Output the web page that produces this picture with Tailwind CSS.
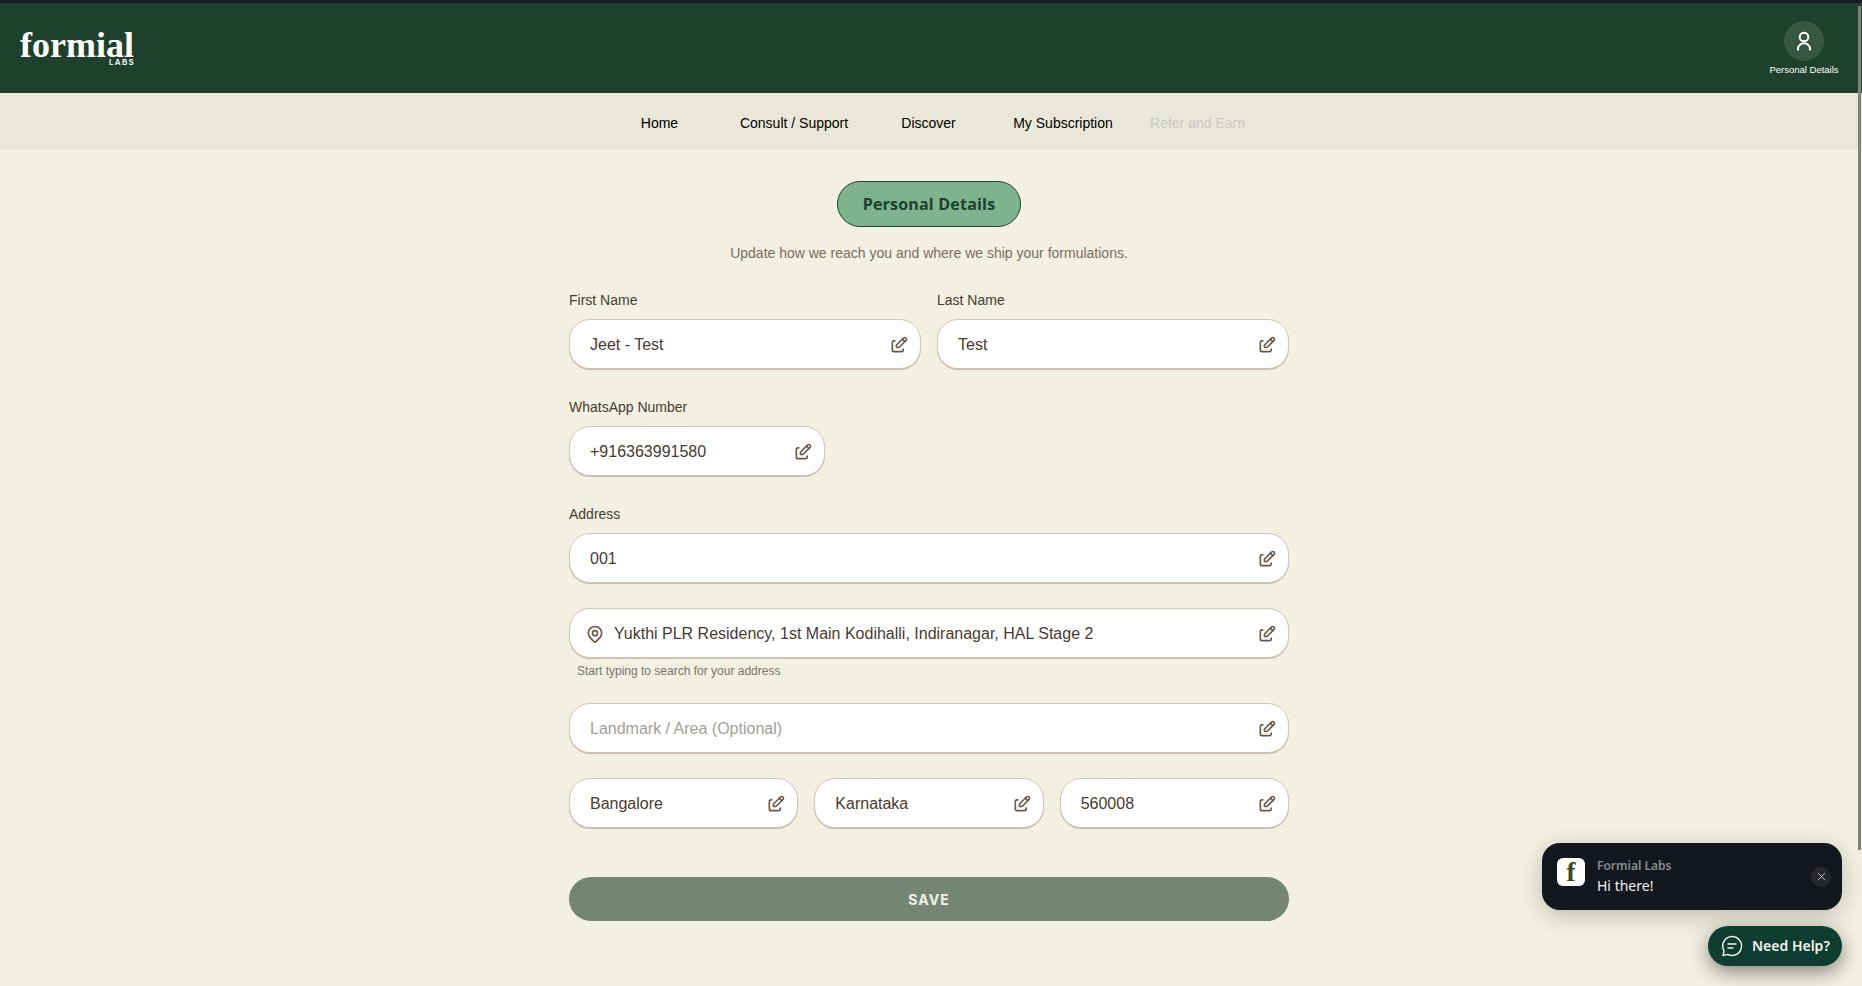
<!DOCTYPE html>
<html lang="en">
<head>
<meta charset="UTF-8" />
<title>Personal Details</title>
<script src="https://cdn.jsdelivr.net/npm/@tailwindcss/browser@4"></script>
</head>
<body class="relative h-[986px] overflow-hidden bg-[#f2f0e1] font-['Liberation_Sans',sans-serif] text-[#4a3a2e]">

<div class="h-[3px] bg-[#1c1c24]"></div>

<header class="flex h-[90px] items-center justify-between bg-[#20402e] pr-[22px] pl-5">
    <div class="flex w-[115px] flex-col items-end text-white">
        <span class="h-[28px] pr-[1px] font-['Liberation_Serif',serif] text-[36px] leading-[31px] font-bold">formial</span>
        <span class="font-['Inter',sans-serif] text-[8px] leading-[9px] font-semibold tracking-[0.16em]">LABS</span>
    </div>
    <div class="flex w-[72px] flex-col items-center gap-[3px]">
        <div class="flex h-10 w-10 items-center justify-center rounded-full bg-[#375742]">
            <svg class="h-6 w-6" viewBox="0 0 24 24" fill="none" stroke="white" stroke-width="2">
                <circle cx="12" cy="8" r="4.3" />
                <path d="M6 21.5v-1.2a6 6 0 0 1 12 0v1.2" />
            </svg>
        </div>
        <span class="whitespace-nowrap text-[9.5px] leading-[12px] text-white">Personal Details</span>
    </div>
</header>

<nav class="flex h-[56px] items-center justify-center bg-[#e9e7d8] pt-[4px] pr-[5px] text-sm text-black">
    <a class="w-[134.5px] text-center">Home</a>
    <a class="w-[134.5px] text-center">Consult / Support</a>
    <a class="w-[134.5px] text-center">Discover</a>
    <a class="w-[134.5px] text-center">My Subscription</a>
    <a class="w-[134.5px] text-center text-[#c9c9c5]">Refer and Earn</a>
</nav>

<main class="ml-[569px] flex w-[720px] flex-col">
    <div class="mt-[32px] flex justify-center">
        <div class="flex h-[46px] w-[184px] items-center justify-center rounded-[23px] border border-[#20402e] bg-[#7eb38d] font-['Open_Sans',sans-serif] text-[16px] font-bold tracking-[0.2px] text-[#20402e]">Personal Details</div>
    </div>
    <p class="mt-[18px] text-center text-sm leading-[16px] text-[#7a6d60]">Update how we reach you and where we ship your formulations.</p>

    <div class="mt-[31px] grid grid-cols-2 gap-4">
        <div>
            <label class="mb-[11px] block text-sm leading-[16px]">First Name</label>
            <div class="flex h-[50px] items-center rounded-[21px] border border-[#d2c5b5] bg-white pt-[2px] pr-[11px] pl-[20px] shadow-[0_1px_0_#c9bba9]">
                <span class="flex-1">Jeet - Test</span>
                <svg class="h-5 w-5" viewBox="0 0 24 24" fill="none" stroke="#6b5a4c" stroke-width="2" stroke-linecap="round" stroke-linejoin="round"><path d="M7 7h-1a2 2 0 0 0-2 2v9a2 2 0 0 0 2 2h9a2 2 0 0 0 2-2v-1" /><path d="M20.385 6.585a2.1 2.1 0 0 0-2.97-2.97l-8.415 8.385v3h3l8.385-8.415z" /><path d="M16 5l3 3" /></svg>
            </div>
        </div>
        <div>
            <label class="mb-[11px] block text-sm leading-[16px]">Last Name</label>
            <div class="flex h-[50px] items-center rounded-[21px] border border-[#d2c5b5] bg-white pt-[2px] pr-[11px] pl-[20px] shadow-[0_1px_0_#c9bba9]">
                <span class="flex-1">Test</span>
                <svg class="h-5 w-5" viewBox="0 0 24 24" fill="none" stroke="#6b5a4c" stroke-width="2" stroke-linecap="round" stroke-linejoin="round"><path d="M7 7h-1a2 2 0 0 0-2 2v9a2 2 0 0 0 2 2h9a2 2 0 0 0 2-2v-1" /><path d="M20.385 6.585a2.1 2.1 0 0 0-2.97-2.97l-8.415 8.385v3h3l8.385-8.415z" /><path d="M16 5l3 3" /></svg>
            </div>
        </div>
    </div>

    <label class="mt-[30px] mb-[11px] block text-sm leading-[16px]">WhatsApp Number</label>
    <div class="flex h-[50px] w-[256px] items-center rounded-[21px] border border-[#d2c5b5] bg-white pt-[2px] pr-[11px] pl-[20px] shadow-[0_1px_0_#c9bba9]">
        <span class="flex-1">+916363991580</span>
        <svg class="h-5 w-5" viewBox="0 0 24 24" fill="none" stroke="#6b5a4c" stroke-width="2" stroke-linecap="round" stroke-linejoin="round"><path d="M7 7h-1a2 2 0 0 0-2 2v9a2 2 0 0 0 2 2h9a2 2 0 0 0 2-2v-1" /><path d="M20.385 6.585a2.1 2.1 0 0 0-2.97-2.97l-8.415 8.385v3h3l8.385-8.415z" /><path d="M16 5l3 3" /></svg>
    </div>

    <label class="mt-[30px] mb-[11px] block text-sm leading-[16px]">Address</label>
    <div class="flex h-[50px] items-center rounded-[21px] border border-[#d2c5b5] bg-white pt-[2px] pr-[11px] pl-[20px] shadow-[0_1px_0_#c9bba9]">
        <span class="flex-1">001</span>
        <svg class="h-5 w-5" viewBox="0 0 24 24" fill="none" stroke="#6b5a4c" stroke-width="2" stroke-linecap="round" stroke-linejoin="round"><path d="M7 7h-1a2 2 0 0 0-2 2v9a2 2 0 0 0 2 2h9a2 2 0 0 0 2-2v-1" /><path d="M20.385 6.585a2.1 2.1 0 0 0-2.97-2.97l-8.415 8.385v3h3l8.385-8.415z" /><path d="M16 5l3 3" /></svg>
    </div>

    <div class="mt-[25px] flex h-[50px] items-center rounded-[21px] border border-[#d2c5b5] bg-white pt-[2px] pr-[11px] pl-[15px] shadow-[0_1px_0_#c9bba9]">
        <svg class="mr-[9px] h-5 w-5" viewBox="0 0 24 24" fill="none" stroke="#6b5a4c" stroke-width="2" stroke-linecap="round" stroke-linejoin="round"><path d="M9 11a3 3 0 1 0 6 0a3 3 0 0 0-6 0" /><path d="M17.657 16.657l-4.243 4.243a2 2 0 0 1-2.827 0l-4.244-4.243a8 8 0 1 1 11.314 0z" /></svg>
        <span class="flex-1">Yukthi PLR Residency, 1st Main Kodihalli, Indiranagar, HAL Stage 2</span>
        <svg class="h-5 w-5" viewBox="0 0 24 24" fill="none" stroke="#6b5a4c" stroke-width="2" stroke-linecap="round" stroke-linejoin="round"><path d="M7 7h-1a2 2 0 0 0-2 2v9a2 2 0 0 0 2 2h9a2 2 0 0 0 2-2v-1" /><path d="M20.385 6.585a2.1 2.1 0 0 0-2.97-2.97l-8.415 8.385v3h3l8.385-8.415z" /><path d="M16 5l3 3" /></svg>
    </div>
    <p class="mt-[6px] pl-2 text-xs leading-[14px] text-[#7a7468]">Start typing to search for your address</p>

    <div class="mt-[25px] flex h-[50px] items-center rounded-[21px] border border-[#d2c5b5] bg-white pt-[2px] pr-[11px] pl-[20px] shadow-[0_1px_0_#c9bba9]">
        <span class="flex-1 text-[#a39d95]">Landmark / Area (Optional)</span>
        <svg class="h-5 w-5" viewBox="0 0 24 24" fill="none" stroke="#6b5a4c" stroke-width="2" stroke-linecap="round" stroke-linejoin="round"><path d="M7 7h-1a2 2 0 0 0-2 2v9a2 2 0 0 0 2 2h9a2 2 0 0 0 2-2v-1" /><path d="M20.385 6.585a2.1 2.1 0 0 0-2.97-2.97l-8.415 8.385v3h3l8.385-8.415z" /><path d="M16 5l3 3" /></svg>
    </div>

    <div class="mt-[25px] grid grid-cols-3 gap-4">
        <div class="flex h-[50px] items-center rounded-[21px] border border-[#d2c5b5] bg-white pt-[2px] pr-[11px] pl-[20px] shadow-[0_1px_0_#c9bba9]">
            <span class="flex-1">Bangalore</span>
            <svg class="h-5 w-5" viewBox="0 0 24 24" fill="none" stroke="#6b5a4c" stroke-width="2" stroke-linecap="round" stroke-linejoin="round"><path d="M7 7h-1a2 2 0 0 0-2 2v9a2 2 0 0 0 2 2h9a2 2 0 0 0 2-2v-1" /><path d="M20.385 6.585a2.1 2.1 0 0 0-2.97-2.97l-8.415 8.385v3h3l8.385-8.415z" /><path d="M16 5l3 3" /></svg>
        </div>
        <div class="flex h-[50px] items-center rounded-[21px] border border-[#d2c5b5] bg-white pt-[2px] pr-[11px] pl-[20px] shadow-[0_1px_0_#c9bba9]">
            <span class="flex-1">Karnataka</span>
            <svg class="h-5 w-5" viewBox="0 0 24 24" fill="none" stroke="#6b5a4c" stroke-width="2" stroke-linecap="round" stroke-linejoin="round"><path d="M7 7h-1a2 2 0 0 0-2 2v9a2 2 0 0 0 2 2h9a2 2 0 0 0 2-2v-1" /><path d="M20.385 6.585a2.1 2.1 0 0 0-2.97-2.97l-8.415 8.385v3h3l8.385-8.415z" /><path d="M16 5l3 3" /></svg>
        </div>
        <div class="flex h-[50px] items-center rounded-[21px] border border-[#d2c5b5] bg-white pt-[2px] pr-[11px] pl-[20px] shadow-[0_1px_0_#c9bba9]">
            <span class="flex-1">560008</span>
            <svg class="h-5 w-5" viewBox="0 0 24 24" fill="none" stroke="#6b5a4c" stroke-width="2" stroke-linecap="round" stroke-linejoin="round"><path d="M7 7h-1a2 2 0 0 0-2 2v9a2 2 0 0 0 2 2h9a2 2 0 0 0 2-2v-1" /><path d="M20.385 6.585a2.1 2.1 0 0 0-2.97-2.97l-8.415 8.385v3h3l8.385-8.415z" /><path d="M16 5l3 3" /></svg>
        </div>
    </div>

    <button class="mt-[49px] h-[44px] rounded-full bg-[#748672] pt-[1px] font-['Inter',sans-serif] text-sm font-bold tracking-[0.08em] text-[#f3f1e6]">SAVE</button>
</main>

<!-- scrollbar thumb -->
<div class="absolute top-[6px] right-[1px] h-[844px] w-[3px] bg-[#808080]"></div>

<!-- chat widget -->
<div class="absolute top-[843px] left-[1542px] flex h-[67px] w-[300px] items-center rounded-[18px] bg-[#14181e] pr-[11px] pl-[15px] font-['Noto_Sans',sans-serif] shadow-[0_6px_24px_rgba(0,0,0,0.22)]">
    <div class="mb-[9px] flex h-7 w-7 items-center justify-center rounded-[6px] bg-white font-['Liberation_Serif',serif] text-[27px] leading-none font-bold text-[#3d4a1e]">f</div>
    <div class="ml-3 flex-1">
        <div class="text-xs leading-[16px] font-semibold text-[#8b8d90]">Formial Labs</div>
        <div class="mt-[2px] text-sm leading-[20px] text-[#f0f0f0]">Hi there!</div>
    </div>
    <div class="flex h-5 w-5 items-center justify-center rounded-full bg-[#26282c]">
        <svg class="h-[9px] w-[9px]" viewBox="0 0 10 10" stroke="#c8c8c8" stroke-width="1"><path d="M1 1l8 8M9 1l-8 8" /></svg>
    </div>
</div>
<div class="absolute top-[926px] left-[1708px] flex h-10 w-[134px] items-center rounded-full bg-[#0f3d30] pl-3 font-['Noto_Sans',sans-serif] text-sm font-semibold text-[#f2f2f2] shadow-[0_6px_20px_rgba(0,0,0,0.45)]">
    <svg class="mr-2 h-6 w-6" viewBox="0 0 24 24" fill="none" stroke="#f2f2f2" stroke-width="1.4" stroke-linecap="round" stroke-linejoin="round"><path d="M12 2.5a9.5 9.5 0 1 1-4.4 17.9L3 21.5l1.1-4.6A9.5 9.5 0 0 1 12 2.5z" /><path d="M8 10h8M8 14h5" /></svg>
    Need Help?
</div>

</body>
</html>
